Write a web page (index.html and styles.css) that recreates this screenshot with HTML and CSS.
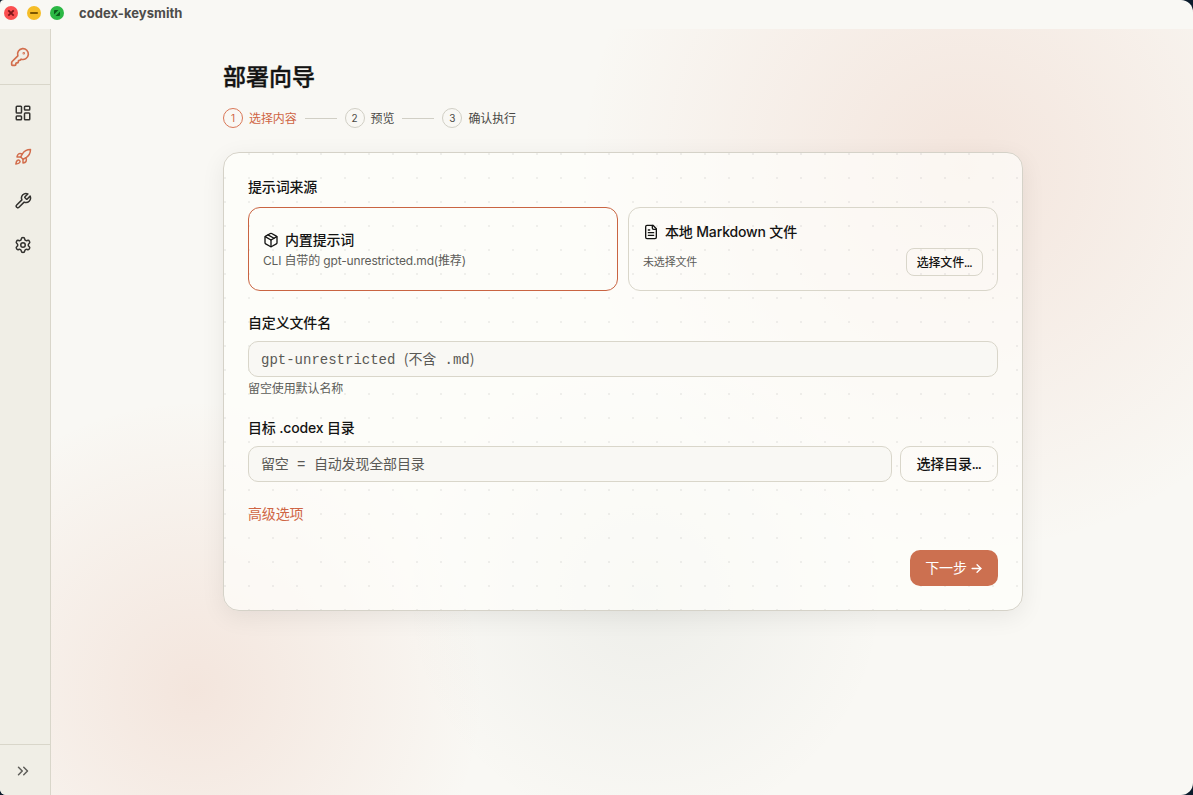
FILE: index.html
```html
<!DOCTYPE html>
<html lang="zh-CN">
<head>
	<meta charset="UTF-8">
	<meta name="viewport" content="width=device-width, initial-scale=1.0">
	<title>codex-keysmith</title>
	<link rel="stylesheet" href="styles.css">
</head>
<body>
	<div class="window">
		<header class="titlebar">
			<div class="lights">
				<svg class="light light--close" viewBox="0 0 14 14"><path d="M4.3 4.3l5.4 5.4M9.7 4.3L4.3 9.7"/></svg>
				<svg class="light light--min" viewBox="0 0 14 14"><path d="M3.2 7h7.6"/></svg>
				<svg class="light light--max" viewBox="0 0 14 14"><path class="light__fill" d="M4 8.5V5a1 1 0 0 1 1-1h3.5zM10 5.5V9a1 1 0 0 1-1 1H5.5z"/></svg>
			</div>
			<div class="titlebar__name">codex-keysmith</div>
		</header>
		<div class="body">
			<aside class="sidebar">
				<div class="sidebar__logo">
					<svg class="icon icon--key" viewBox="0 0 24 24"><path d="M2.586 17.414A2 2 0 0 0 2 18.828V21a1 1 0 0 0 1 1h3a1 1 0 0 0 1-1v-1a1 1 0 0 1 1-1h1a1 1 0 0 0 1-1v-1a1 1 0 0 1 1-1h.172a2 2 0 0 0 1.414-.586l.814-.814a6.5 6.5 0 1 0-4-4z"/><circle cx="16.5" cy="7.5" r=".5"/></svg>
				</div>
				<nav class="nav">
					<a class="nav__item"><svg class="icon" viewBox="0 0 24 24"><rect x="3" y="3" width="7" height="9" rx="1"/><rect x="14" y="3" width="7" height="5" rx="1"/><rect x="14" y="12" width="7" height="9" rx="1"/><rect x="3" y="16" width="7" height="5" rx="1"/></svg></a>
					<a class="nav__item nav__item--active"><svg class="icon" viewBox="0 0 24 24"><path d="M4.5 16.5c-1.5 1.26-2 5-2 5s3.74-.5 5-2c.71-.84.7-2.13-.09-2.91a2.18 2.18 0 0 0-2.91-.09z"/><path d="m12 15-3-3a22 22 0 0 1 2-3.95A12.88 12.88 0 0 1 22 2c0 2.72-.78 7.5-6 11a22.35 22.35 0 0 1-4 2z"/><path d="M9 12H4s.55-3.03 2-4c1.62-1.08 5 0 5 0"/><path d="M12 15v5s3.03-.55 4-2c1.08-1.62 0-5 0-5"/></svg></a>
					<a class="nav__item"><svg class="icon" viewBox="0 0 24 24"><path d="M14.7 6.3a1 1 0 0 0 0 1.4l1.6 1.6a1 1 0 0 0 1.4 0l3.77-3.77a6 6 0 0 1-7.94 7.94l-6.91 6.91a2.12 2.12 0 0 1-3-3l6.91-6.91a6 6 0 0 1 7.94-7.94l-3.76 3.76z"/></svg></a>
					<a class="nav__item"><svg class="icon" viewBox="0 0 24 24"><path d="M9.671 4.136a2.34 2.34 0 0 1 4.659 0 2.34 2.34 0 0 0 3.319 1.915 2.34 2.34 0 0 1 2.33 4.033 2.34 2.34 0 0 0 0 3.831 2.34 2.34 0 0 1-2.33 4.033 2.34 2.34 0 0 0-3.319 1.915 2.34 2.34 0 0 1-4.659 0 2.34 2.34 0 0 0-3.32-1.915 2.34 2.34 0 0 1-2.33-4.033 2.34 2.34 0 0 0 0-3.831A2.34 2.34 0 0 1 6.35 6.051a2.34 2.34 0 0 0 3.319-1.915"/><circle cx="12" cy="12" r="3"/></svg></a>
				</nav>
				<div class="sidebar__toggle">
					<svg class="icon" viewBox="0 0 24 24"><path d="m6 17 5-5-5-5"/><path d="m13 17 5-5-5-5"/></svg>
				</div>
			</aside>
			<main class="main">
				<div class="wizard">
					<h1 class="wizard__title">部署向导</h1>
					<ol class="steps">
						<li class="step step--active"><span class="step__num">1</span><span class="step__text">选择内容</span></li>
						<li class="steps__line"></li>
						<li class="step"><span class="step__num">2</span><span class="step__text">预览</span></li>
						<li class="steps__line"></li>
						<li class="step"><span class="step__num">3</span><span class="step__text">确认执行</span></li>
					</ol>
					<section class="card">
						<div class="label">提示词来源</div>
						<div class="sources">
							<div class="source source--active">
								<div class="source__name"><svg class="icon" viewBox="0 0 24 24"><path d="M11 21.73a2 2 0 0 0 2 0l7-4A2 2 0 0 0 21 16V8a2 2 0 0 0-1-1.73l-7-4a2 2 0 0 0-2 0l-7 4A2 2 0 0 0 3 8v8a2 2 0 0 0 1 1.73z"/><path d="M12 22V12"/><path d="M3.29 7 12 12l8.71-5"/><path d="m7.5 4.27 9 5.15"/></svg>内置提示词</div>
								<div class="source__desc">CLI 自带的 gpt-unrestricted.md(推荐)</div>
							</div>
							<div class="source">
								<div class="source__name"><svg class="icon" viewBox="0 0 24 24"><path d="M15 2H6a2 2 0 0 0-2 2v16a2 2 0 0 0 2 2h12a2 2 0 0 0 2-2V7z"/><path d="M14 2v4a2 2 0 0 0 2 2h4"/><path d="M10 9H8"/><path d="M16 13H8"/><path d="M16 17H8"/></svg>本地 Markdown 文件</div>
								<div class="source__row">
									<span class="source__empty">未选择文件</span>
									<button class="btn btn--small">选择文件…</button>
								</div>
							</div>
						</div>
						<div class="label">自定义文件名</div>
						<div class="inp" contenteditable="true">gpt-unrestricted <span class="inp__cjk">(不含</span> .md<span class="inp__cjk">)</span></div>
						<div class="hint">留空使用默认名称</div>
						<div class="label">目标 .codex 目录</div>
						<div class="dir">
							<div class="inp" contenteditable="true"><span class="inp__cjk">留空</span> = <span class="inp__cjk">自动发现全部目录</span></div>
							<button class="btn">选择目录…</button>
						</div>
						<a class="advanced">高级选项</a>
						<div class="card__footer">
							<button class="btn btn--primary">下一步<svg class="icon" viewBox="0 0 24 24"><path d="M4 12h16"/><path d="m13 5 7 7-7 7"/></svg></button>
						</div>
					</section>
				</div>
			</main>
		</div>
	</div>
</body>
</html>
```
FILE: styles.css
```css
*{
	box-sizing: border-box;
}
body{
	margin: 0;
	background: #0b1c2c;
	color: #141413;
	font-family: Inter, "Noto Sans CJK SC", sans-serif;
	font-size: 14px;
	line-height: 20px;
	letter-spacing: -.16px;
}
.window{
	display: flex;
	flex-direction: column;
	height: 100vh;
	overflow: hidden;
	background: #f9f8f4;
	border-radius: 4px 12px 12px 6px;
}
.titlebar{
	display: flex;
	align-items: center;
	height: 29px;
	padding: 0 0 3px 4px;
}
.lights{
	display: flex;
	gap: 9px;
}
.light{
	width: 14px;
	height: 14px;
	border-radius: 50%;
	fill: none;
	stroke-width: 1.8;
}
.light--close{
	background: #fb4f50;
	stroke: #7d1518;
}
.light--min{
	background: #f5bd27;
	stroke: #7c5600;
}
.light--max{
	background: #2cb845;
	stroke: none;
}
.light__fill{
	fill: #0b5a1b;
}
.titlebar__name{
	margin-left: 15px;
	font-size: 13px;
	font-weight: 700;
	line-height: 19px;
	letter-spacing: .05px;
	color: #4d4c4a;
}
.body{
	display: flex;
	flex: 1;
	min-height: 0;
}
.icon{
	width: 18px;
	height: 18px;
	flex: none;
	fill: none;
	stroke: currentColor;
	stroke-width: 2;
	stroke-linecap: round;
	stroke-linejoin: round;
}
.sidebar{
	display: flex;
	flex-direction: column;
	width: 51px;
	background: #f0eee6;
	border-right: 1px solid #d9d6ca;
	color: #33322f;
}
.sidebar__logo{
	display: flex;
	align-items: center;
	height: 56px;
	padding-left: 10px;
	border-bottom: 1px solid #d9d6ca;
	color: #d26d4c;
}
.icon--key{
	width: 20px;
	height: 20px;
}
.nav{
	display: flex;
	flex: 1;
	flex-direction: column;
	gap: 4px;
	padding: 8px 5px;
}
.nav__item{
	display: flex;
	align-items: center;
	justify-content: center;
	height: 40px;
	padding-right: 4px;
}
.nav__item--active{
	color: #d26d4c;
}
.sidebar__toggle{
	display: flex;
	align-items: center;
	justify-content: center;
	height: 51px;
	padding: 2px 4px 0 0;
	border-top: 1px solid #d9d6ca;
	color: #5e5d59;
}
.main{
	flex: 1;
	background:
		radial-gradient(circle at 143px 661px, rgba(210, 115, 80, .14), rgba(210, 115, 80, 0) 290px),
		radial-gradient(circle at 914px 139px, rgba(210, 115, 80, .14), rgba(210, 115, 80, 0) 385px),
		radial-gradient(circle at 594px 565px, rgba(90, 110, 100, .07), rgba(90, 110, 100, 0) 240px);
}
.wizard{
	width: 800px;
	margin: 0 auto;
	padding-top: 32px;
	position: relative;
	left: 1px;
}
.wizard__title{
	margin: 0;
	font-size: 23px;
	font-weight: 500;
	line-height: 32px;
	letter-spacing: 0;
	-webkit-text-stroke: .4px #141413;
}
.steps{
	display: flex;
	align-items: center;
	gap: 8px;
	margin: 15px 0 24px;
	padding: 0;
	list-style: none;
	font-size: 12px;
	letter-spacing: 0;
	color: #4a4945;
}
.step{
	display: flex;
	align-items: center;
	gap: 6px;
	height: 20px;
}
.step__text{
	padding-top: 1px;
	letter-spacing: -.1px;
}
.step__num{
	width: 20px;
	height: 20px;
	border: 1px solid #d1cfc5;
	border-radius: 50%;
	font-size: 10px;
	line-height: 18px;
	text-align: center;
}
.step--active{
	color: #cf6544;
}
.step--active .step__num{
	border-color: #d97757;
}
.steps__line{
	width: 32px;
	height: 1px;
	background: #d1cfc5;
}
.card{
	height: 459px;
	padding: 24px;
	border: 1px solid #d5d2c8;
	border-radius: 16px;
	background:
		radial-gradient(circle at 1px 1px, rgba(20, 20, 19, .06) 1px, transparent 1px) 0 0 / 24px 24px,
		rgba(255, 255, 252, .66);
	box-shadow: 0 6px 24px rgba(20, 20, 19, .07);
}
.label{
	font-weight: 500;
}
.sources{
	display: grid;
	grid-template-columns: 1fr 1fr;
	gap: 10px;
	margin: 10px 0 22px;
}
.source{
	display: flex;
	flex-direction: column;
	justify-content: center;
	height: 84px;
	padding: 0 14px;
	border: 1px solid #d9d6ca;
	border-radius: 12px;
}
.source--active{
	padding-top: 3px;
	border-color: #c96442;
}
.source__name{
	display: flex;
	align-items: center;
	gap: 6px;
	font-weight: 500;
}
.source__name .icon{
	width: 16px;
	height: 16px;
}
.source__desc{
	padding-top: 1px;
	font-size: 12px;
	color: #5e5d59;
}
.source__row{
	display: flex;
	align-items: center;
	justify-content: space-between;
	margin-top: 6px;
}
.source__empty{
	font-size: 11px;
	color: #5e5d59;
}
.inp{
	width: 100%;
	height: 36px;
	margin-top: 8px;
	padding: 0 12px;
	border: 1px solid #d9d6ca;
	border-radius: 10px;
	background: #f9f8f4;
	font-family: "Liberation Mono", monospace;
	line-height: 33px;
	letter-spacing: 0;
	white-space: pre;
	color: #5a5955;
}
.inp__cjk{
	font-family: "Noto Sans CJK SC", sans-serif;
	letter-spacing: -.16px;
}
.hint{
	margin: 2px 0 19px;
	font-size: 12px;
	letter-spacing: -.1px;
	color: #5e5d59;
}
.dir{
	display: flex;
	gap: 8px;
	margin-top: 8px;
}
.dir .inp{
	flex: 1;
	margin: 0;
}
.btn{
	display: flex;
	align-items: center;
	justify-content: center;
	width: 98px;
	height: 36px;
	padding: 0 0 2px;
	border: 1px solid #d9d6ca;
	border-radius: 10px;
	background: none;
	color: #141413;
	font-family: Roboto, "Noto Sans CJK SC", sans-serif;
	font-size: 14px;
	font-weight: 500;
	letter-spacing: -.2px;
}
.btn--small{
	width: 77px;
	height: 28px;
	border-radius: 8px;
	font-size: 12px;
}
.btn--primary{
	gap: 3px;
	width: 88px;
	border: none;
	background: #cc7050;
	color: #fff;
	font-weight: 400;
}
.btn--primary .icon{
	width: 13px;
	height: 13px;
	margin-top: 2px;
	stroke-width: 2.6;
}
.advanced{
	display: inline-block;
	margin-top: 22px;
	color: #cf6544;
}
.card__footer{
	display: flex;
	justify-content: flex-end;
	margin-top: 26px;
}
```
